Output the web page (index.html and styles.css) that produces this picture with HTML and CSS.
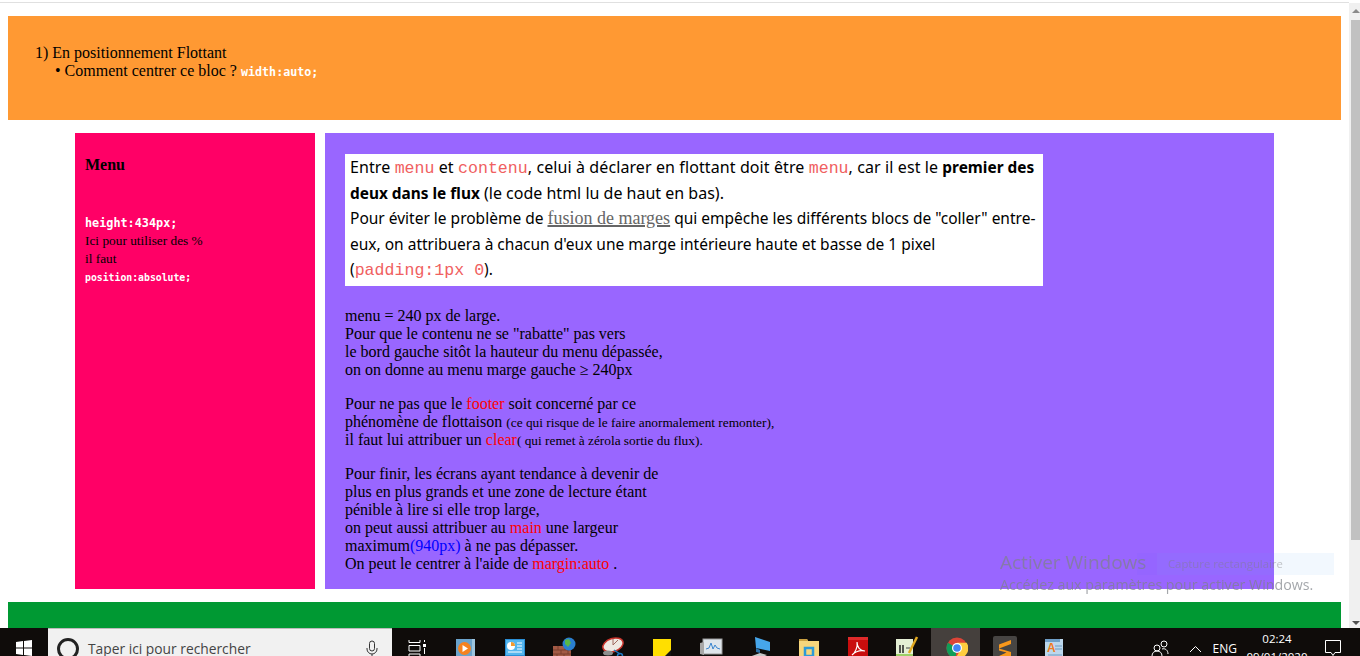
FILE: index.html
```html
<!DOCTYPE html>
<html lang="fr">
<head>
<meta charset="utf-8">
<title>Positionnement flottant</title>
<link rel="stylesheet" href="styles.css">
</head>
<body>
<div class="page">
  <div class="header">
    <ol>
      <li>1) En positionnement Flottant</li>
      <li class="sub">• Comment centrer ce bloc ? <code>width:auto;</code></li>
    </ol>
  </div>
  <div class="main">
    <div class="menu">
      <h3>Menu</h3>
      <p><code class="big">height:434px;</code><br>
      Ici pour utiliser des %<br>
      il faut<br>
      <code>position:absolute;</code></p>
    </div>
    <div class="content">
      <div class="box">
        <span class="lead">Entre <span class="mono">menu</span> et <span class="mono">contenu</span>, celui à déclarer en flottant doit être <span class="mono">menu</span>, car il est le</span> <b>premier des deux dans le flux</b> (le code html lu de haut en bas).<br>
        <span class="second">Pour éviter le problème de <a href="#">fusion de marges</a> qui empêche les différents blocs de "coller" entre-eux, on attribuera à chacun d'eux une marge intérieure haute et basse de 1 pixel (<span class="mono">padding:1px 0</span>).</span>
      </div>
      <p>menu = 240 px de large.<br>
      Pour que le contenu ne se "rabatte" pas vers<br>
      le bord gauche sitôt la hauteur du menu dépassée,<br>
      on on donne au menu marge gauche ≥ 240px</p>
      <p>Pour ne pas que le <span class="red">footer</span> soit concerné par ce<br>
      phénomène de flottaison <small>(ce qui risque de le faire anormalement remonter),</small><br>
      il faut lui attribuer un <span class="red">clear</span><small>( qui remet à zérola sortie du flux).</small></p>
      <p>Pour finir, les écrans ayant tendance à devenir de<br>
      plus en plus grands et une zone de lecture étant<br>
      pénible à lire si elle trop large,<br>
      on peut aussi attribuer au <span class="red">main</span> une largeur<br>
      maximum<span class="blue">(940px)</span> à ne pas dépasser.<br>
      On peut le centrer à l'aide de <span class="red">margin:auto</span> .</p>
    </div>
  </div>
  <div class="footer"></div>
</div>

<div class="scrollbar">
  <div class="arrow up"></div>
  <div class="thumb"></div>
  <div class="arrow down"></div>
</div>

<div class="watermark">
  <div class="wm-title">Activer Windows</div>
  <div class="wm-text">Accédez aux paramètres pour activer Windows.</div>
</div>
<div class="capture">Capture rectangulaire</div>

<div class="taskbar">
  <div class="start">
    <svg width="16" height="16" viewBox="0 0 16 16"><path fill="#fff" d="M0 2 7 1V7.500H0zM8 .9 16 0V7.500H8zM0 8.500H7V15L0 14zM8 8.500H16V16L8 15.100z"/></svg>
  </div>
  <div class="search">
    <span class="cortana"></span>
    <span class="search-text">Taper ici pour rechercher</span>
    <svg class="mic" width="12" height="18" viewBox="0 0 12 18"><rect x="3.500" y="1" width="5" height="10" rx="2.500" fill="none" stroke="#333"/><path d="M1 8v1a5 5 0 0 0 10 0V8M6 14v3M3 17h6" fill="none" stroke="#333"/></svg>
  </div>
  <div class="apps">
    <span class="app"><svg width="24" height="24" viewBox="0 0 24 24"><path fill="none" stroke="#fff" d="M4 4V6.500H15V4M4 9.500H15V15H4zM4 20V18H15V20M19.500 4V6M19.500 12V18"/><rect x="18" y="8" width="3" height="3" fill="#fff"/></svg></span>
    <span class="app"><svg width="24" height="24" viewBox="0 0 24 24"><rect x="2" y="3" width="19" height="21" fill="#6aa3cc"/><rect x="18" y="3" width="3" height="21" fill="#9cc4de"/><circle cx="10.500" cy="12.500" r="6.500" fill="#f5821f"/><path d="M8.500 9 14 12.500 8.500 16z" fill="#fff"/></svg></span>
    <span class="app"><svg width="24" height="24" viewBox="0 0 24 24"><rect x="2" y="3" width="20" height="17" fill="#2a8fd6"/><rect x="3" y="4" width="18" height="15" fill="#55b6ee"/><circle cx="8" cy="10" r="4" fill="#fff"/><path d="M8 10V6A4 4 0 0 1 12 10z" fill="#f39a2e"/><path d="M14 7h5M14 10h5M14 13h5M5 16h14" stroke="#fff"/></svg></span>
    <span class="app"><svg width="24" height="24" viewBox="0 0 24 24"><rect x="1" y="10" width="18" height="14" fill="#a35a45"/><path d="M1 14H19M1 18H19M1 22H19M6 10V14M13 10V14M9 14V18M16 14V18M5 18V22M12 18V22" stroke="#7a3e2e"/><circle cx="17" cy="8" r="6.500" fill="#2a7fd0"/><path d="M13 4 17 3 19 7 16 11 13 8z" fill="#58b848"/></svg></span>
    <span class="app"><svg width="24" height="24" viewBox="0 0 24 24"><ellipse cx="12" cy="9" rx="10.500" ry="6.500" transform="rotate(-18 12 9)" fill="#efe9e2" stroke="#c8332b" stroke-width="1.500"/><path d="M12 9 17 4M12 9 12 3" stroke="#a06a60"/><ellipse cx="7" cy="17" rx="5" ry="2.500" fill="#8d8d8d"/><circle cx="19" cy="20" r="2.500" fill="none" stroke="#1c78c0" stroke-width="1.500"/><path d="M13 14 19 18" stroke="#1c78c0" stroke-width="1.500"/></svg></span>
    <span class="app"><svg width="24" height="24" viewBox="0 0 24 24"><rect x="3" y="3" width="18" height="21" fill="#ffdf00"/><path d="M11 24 21 14V24z" fill="#151515"/></svg></span>
    <span class="app"><svg width="24" height="24" viewBox="0 0 24 24"><rect x="4" y="3" width="19" height="15" fill="#dfe6ec" stroke="#9a9a9a"/><path d="M7 13 10 12 12 7 14 13 16 9 18 12 21 13" fill="none" stroke="#3b86d0"/><path d="M1 7 5 6V19L1 18z" fill="#a8a8a8"/><path d="M7 20H18V24H7z" fill="#8c8c8c"/></svg></span>
    <span class="app"><svg width="24" height="24" viewBox="0 0 24 24"><path d="M7 1 22 6V15L8 12z" fill="#46a6ea"/><path d="M1 21 12 17 19 19 9 24z" fill="#c6c6c6"/><path d="M8 12 12 14V17L8 16z" fill="#2b6ea5"/></svg></span>
    <span class="app"><svg width="24" height="24" viewBox="0 0 24 24"><path d="M2 3H10L11 5H22V24H2z" fill="#f6d67c"/><path d="M2 3H10L11 5H2z" fill="#caa040"/><rect x="8" y="12" width="8" height="8" fill="none" stroke="#2d9ad8" stroke-width="2.500"/></svg></span>
    <span class="app"><svg width="24" height="24" viewBox="0 0 24 24"><rect x="2" y="1" width="20" height="23" fill="#c90d0d"/><rect x="2" y="1" width="20" height="3" fill="#e02a2a"/><path d="M6 19C9 17 12 11 11 6 11 11 14 15 19 15 14 14 9 16 6 19z" fill="none" stroke="#fff" stroke-width="1.200"/></svg></span>
    <span class="app"><svg width="24" height="24" viewBox="0 0 24 24"><path d="M1 3H18V24H1z" fill="#e4efd4"/><path d="M1 18H18V24H1z" fill="#9ccf66"/><path d="M5 9V17M8 9V17" stroke="#222" stroke-width="1.500"/><path d="M11 12H15" stroke="#444"/><path d="M14 17 22 1" stroke="#e0a820" stroke-width="2.500"/></svg></span>
    <span class="app active"><svg width="24" height="24" viewBox="0 0 24 24"><circle cx="13" cy="12" r="10.500" fill="#db4437"/><path d="M13 12 3.900 6.700A10.500 10.500 0 0 0 11.400 22.400z" fill="#0f9d58"/><path d="M13 6.700H22.700A10.500 10.500 0 0 1 11.400 22.400L16.500 14z" fill="#ffcd40"/><circle cx="13" cy="12" r="5" fill="#fff"/><circle cx="13" cy="12" r="3.800" fill="#4285f4"/></svg></span>
    <span class="app"><svg width="24" height="24" viewBox="0 0 24 24"><rect width="24" height="24" rx="2" fill="#474543"/><path d="M18 4 6 8.500V12.500L18 8zM6 12.500 18 16V20L6 24V20L13.500 16.500 6 14.500z" fill="#f8981c"/></svg></span>
    <span class="app"><svg width="24" height="24" viewBox="0 0 24 24"><path d="M3 3H21V24H3z" fill="#bcd7ec"/><path d="M3 3H18V6H3z" fill="#6e9fc8"/><text x="5" y="16" class="tile-a">A</text><path d="M13 10H20M13 13H20M6 19H20" stroke="#6d9ac0"/></svg></span>
  </div>
  <div class="tray">
    <svg width="20" height="18" viewBox="0 0 20 18"><g fill="none" stroke="#fff"><circle cx="7" cy="9" r="3"/><path d="M2 17c0-3 2-5 5-5s5 2 5 5"/><circle cx="14" cy="5" r="3"/><path d="M12 10c3-1 6 1 6 5"/></g></svg>
    <svg class="chevron" width="13" height="8" viewBox="0 0 13 8"><path d="M1 7 6.500 1.500 12 7" fill="none" stroke="#fff"/></svg>
    <span class="lang">ENG</span>
    <div class="clock"><div>02:24</div><div>09/01/2020</div></div>
    <svg class="notif" width="16" height="16" viewBox="0 0 16 16"><path d="M.5.500h15v12H10l-2 3-2-3H.5z" fill="none" stroke="#fff"/></svg>
  </div>
</div>
</body>
</html>
```
FILE: styles.css
```css
html, body {
  margin: 0;
  padding: 0;
  height: 100%;
  overflow: hidden;
}
body {
  background: #fff;
  color: #000;
  font-family: "Liberation Serif", serif;
  font-size: 16px;
  line-height: 18px;
}
.page {
  width: 1349px;
  border-top: 1px solid #e0e0e0;
  margin-top: 2px;
  padding: 13px 8px 0;
  box-sizing: border-box;
}
code {
  font-family: "DejaVu Sans Mono", monospace;
  font-size: 11.700px;
  font-weight: bold;
  color: #fff;
}

.header {
  background: #ff9933;
  height: 104px;
  padding: 28px 27px 0;
  box-sizing: border-box;
}
.header ol {
  list-style: none;
  margin: 0;
  padding: 0;
}
.header .sub {
  padding-left: 20px;
}

.main {
  display: flex;
  gap: 10px;
  margin: 13px 67px 0;
  height: 456px;
}
.menu {
  width: 240px;
  background: #ff0066;
  padding: 23px 10px 0;
  box-sizing: border-box;
  font-size: 13.330px;
}
.menu h3 {
  margin: 0 0 40px;
  font-size: 16px;
  line-height: 18px;
}
.menu p {
  margin: 0;
}
.menu code {
  font-size: 9.800px;
}
.menu .big {
  font-size: 11.800px;
}
.content {
  flex: 1;
  background: #9966ff;
  padding: 21px 20px 0;
}
.content p {
  margin: 0 0 16px;
}
.content small {
  font-size: 13.330px;
  line-height: 1;
}
.box {
  width: 698px;
  height: 132px;
  box-sizing: border-box;
  background: #fff;
  padding: 1px 5px 0;
  margin-bottom: 21px;
  font-family: "Noto Sans", sans-serif;
  font-size: 16px;
  line-height: 25.600px;
}
.box b {
  font-size: 15.400px;
  line-height: 0;
}
.lead {
  letter-spacing: .1px;
  line-height: 0;
}
.second {
  font-size: 15.500px;
  line-height: 0;
}
.mono {
  font-family: "Liberation Mono", monospace;
  font-size: 16.600px;
  line-height: 0;
  letter-spacing: 0;
  color: #f06060;
}
.box a {
  color: #666;
  font-family: "Liberation Serif", serif;
  font-size: 18px;
  line-height: 0;
  text-decoration-thickness: 2px;
}
.red {
  color: #ff0000;
}
.blue {
  color: #0000ff;
}
.footer {
  background: #009933;
  height: 60px;
  margin-top: 13px;
}

.scrollbar {
  position: fixed;
  top: 3px;
  right: 0;
  bottom: 28px;
  width: 11px;
  background: #f0f0f0;
  display: flex;
  flex-direction: column;
}
.thumb {
  height: 520px;
  flex: none;
  margin-left: 2px;
  background: #c1c1c1;
}
.arrow {
  height: 17px;
  flex: none;
  position: relative;
}
.arrow.down {
  margin-top: auto;
}
.arrow::after {
  content: "";
  position: absolute;
  left: 3px;
  border: 4px solid transparent;
}
.arrow.up::after {
  border-bottom-color: #8a8a8a;
  top: 2px;
}
.arrow.down::after {
  border-top-color: #505050;
  top: 10px;
}

.watermark {
  position: fixed;
  left: 1000px;
  top: 549px;
  color: rgba(125, 130, 135, .7);
  font-family: "Open Sans", sans-serif;
  pointer-events: none;
}
.wm-title {
  font-size: 19px;
  line-height: 26px;
}
.wm-text {
  font-size: 14.200px;
  line-height: 20px;
}
.capture {
  position: fixed;
  left: 1157px;
  top: 553px;
  width: 177px;
  height: 22px;
  padding-left: 11px;
  box-sizing: border-box;
  background: rgba(90, 170, 240, .08);
  color: rgba(128, 128, 128, .45);
  font-family: "Open Sans", sans-serif;
  font-size: 11.300px;
  line-height: 22px;
}
.capture::before {
  content: "";
  position: absolute;
  left: -20px;
  top: 0;
  width: 20px;
  height: 22px;
  background: rgba(90, 90, 255, .06);
}

.taskbar {
  position: fixed;
  left: 0;
  right: 0;
  bottom: 0;
  height: 28px;
  background: #0f0c0a;
  display: flex;
  overflow: hidden;
  color: #fff;
}
.start {
  width: 48px;
  flex: none;
  padding: 12px 0 0 16px;
  box-sizing: border-box;
}
.search {
  width: 344px;
  height: 40px;
  flex: none;
  background: #f1f1f1;
  border-top: 1px solid #bbb;
  box-sizing: border-box;
  display: flex;
  align-items: flex-start;
  padding: 9px 0 0 9px;
  color: #444;
  font-family: "Open Sans", sans-serif;
  font-size: 13.800px;
}
.cortana {
  width: 16px;
  height: 16px;
  border: 3px solid #222;
  border-radius: 50%;
  flex: none;
}
.search-text {
  margin-left: 9px;
  line-height: 22px;
  flex: 1;
}
.mic {
  margin: 2px 14px 0 0;
}
.apps {
  display: flex;
}
.app {
  width: 49px;
  height: 28px;
  display: flex;
  justify-content: center;
  padding-top: 8px;
  box-sizing: border-box;
}
.app.active {
  background: #45403d;
}
.tile-a {
  font-family: "Liberation Sans", sans-serif;
  font-size: 12px;
  font-weight: bold;
  fill: #f07a20;
}
.tray {
  margin-left: auto;
  display: flex;
  align-items: flex-start;
  padding: 11px 0 0;
  font-family: "Open Sans", sans-serif;
  font-size: 12px;
}
.chevron {
  margin: 6px 0 0 19px;
}
.lang {
  margin-left: 11px;
  line-height: 20px;
}
.clock {
  margin: -9px 0 0 3px;
  width: 74px;
  text-align: center;
  line-height: 18px;
  font-size: 11.500px;
}
.notif {
  margin: 1px 19px 0 11px;
}
```
